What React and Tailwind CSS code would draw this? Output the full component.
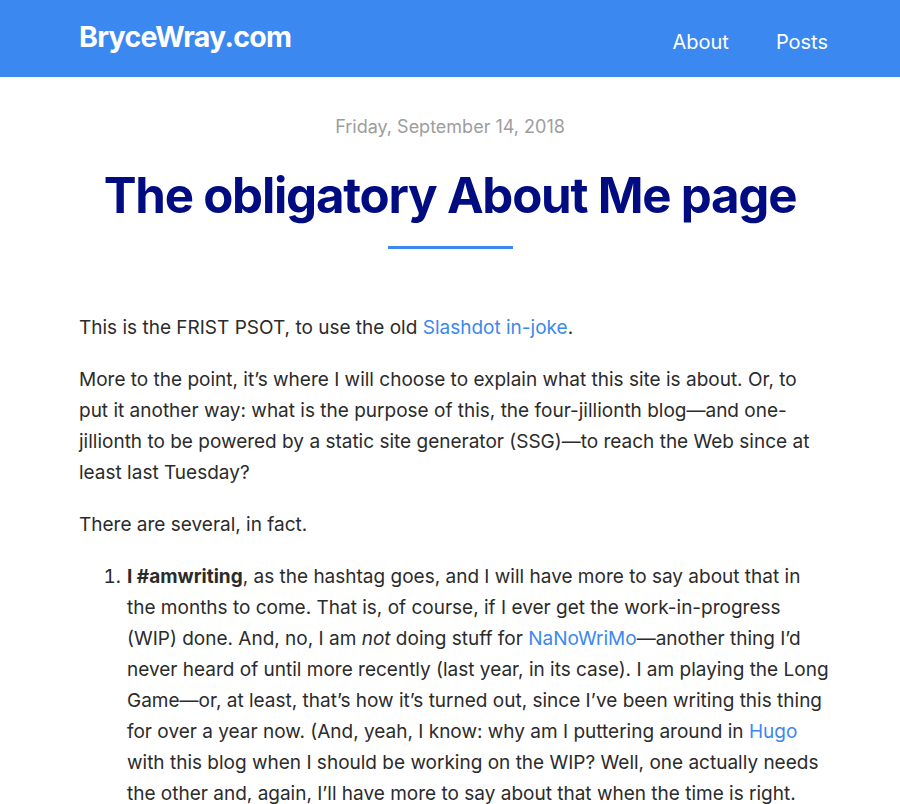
import React from 'react';

const Link = ({ children }) => (
  <a href="#" className="text-[#3b88f0]">
    {children}
  </a>
);

const Header = () => (
  <header className="bg-[#3b88f0] h-[77px] pl-[79px] pr-[72px] flex items-center justify-between">
    <a href="#" className="text-white text-[28.5px] font-bold tracking-tight -mt-[2px]">
      BryceWray.com
    </a>
    <nav className="flex items-center gap-[47px] text-white text-[20px] mt-[6px]">
      <a href="#">About</a>
      <a href="#">Posts</a>
    </nav>
  </header>
);

export default function App() {
  return (
    <div className="min-h-screen bg-white font-['Inter',sans-serif] text-[#2b2b2b]">
      <Header />
      <main className="px-[79px]">
        {/* Post header */}
        <div className="flex flex-col items-center pt-[36px]">
          <div className="text-[18px] leading-[27px] text-[#9d9d9d]">Friday, September 14, 2018</div>
          <h1 className="mt-[26px] text-[49.2px] leading-[58px] font-bold tracking-tight text-[#000c80]">
            The obligatory About Me page
          </h1>
          <div className="mt-[22px] w-[125px] h-[3px] bg-[#3b88f0]" />
        </div>

        {/* Body */}
        <article className="mt-[63px] text-[19px] leading-[31px] space-y-[21px]">
          <p>
            This is the FRIST PSOT, to use the old <Link>Slashdot in-joke</Link>.
          </p>
          <p>
            More to the point, it’s where I will choose to explain what this site is about. Or, to
            put it another way: what is the purpose of this, the four-jillionth blog—and
            one-jillionth to be powered by a static site generator (SSG)—to reach the Web since at
            least last Tuesday?
          </p>
          <p>There are several, in fact.</p>
          {/* line breaks follow the reference wrapping */}
          <ol className="list-decimal pl-[47px] -mr-[16px]">
            <li className="pl-[1px]">
              <strong>I #amwriting</strong>, as the hashtag goes, and I will have more to say about
              that in
              <br />
              the months to come. That is, of course, if I ever get the work-in-progress
              <br />
              (WIP) done. And, no, I am <em>not</em> doing stuff for <Link>NaNoWriMo</Link>—another
              thing I’d
              <br />
              never heard of until more recently (last year, in its case). I am playing the Long
              <br />
              Game—or, at least, that’s how it’s turned out, since I’ve been writing this thing
              <br />
              for over a year now. (And, yeah, I know: why am I puttering around in{' '}
              <Link>Hugo</Link>
              <br />
              with this blog when I should be working on the WIP? Well, one actually needs
              <br />
              the other and, again, I’ll have more to say about that when the time is right.
            </li>
          </ol>
        </article>
      </main>
    </div>
  );
}
